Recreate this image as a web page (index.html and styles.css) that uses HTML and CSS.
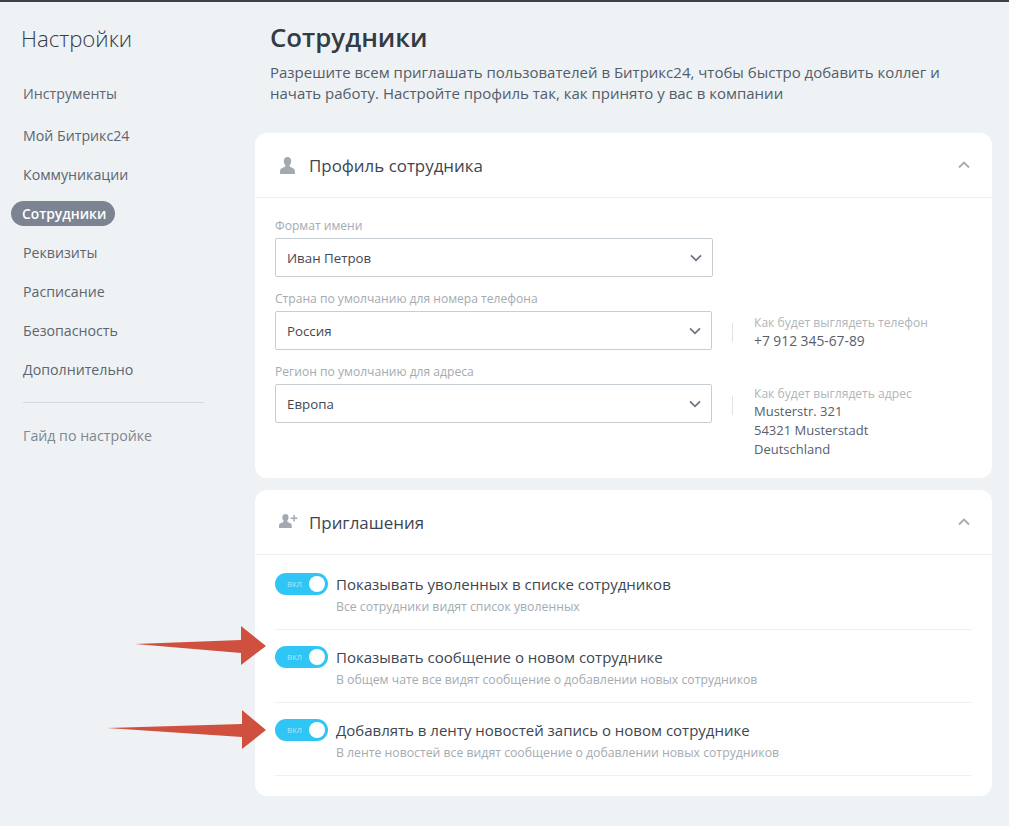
FILE: index.html
```html
<!DOCTYPE html>
<html lang="ru">
<head>
<meta charset="utf-8">
<title>Настройки</title>
<link rel="stylesheet" href="styles.css">
</head>
<body>
<div class="page">
  <aside class="sidebar">
    <div class="side-title">Настройки</div>
    <nav class="nav">
      <a class="nav-item nav-first">Инструменты</a>
      <a class="nav-item">Мой Битрикс24</a>
      <a class="nav-item">Коммуникации</a>
      <a class="nav-item nav-active"><span>Сотрудники</span></a>
      <a class="nav-item">Реквизиты</a>
      <a class="nav-item">Расписание</a>
      <a class="nav-item">Безопасность</a>
      <a class="nav-item">Дополнительно</a>
    </nav>
    <div class="nav-sep"></div>
    <a class="nav-item nav-guide">Гайд по настройке</a>
  </aside>
  <main class="main">
    <h1 class="title">Сотрудники</h1>
    <p class="lead">Разрешите всем приглашать пользователей в Битрикс24, чтобы быстро добавить коллег и начать работу. Настройте профиль так, как принято у вас в компании</p>

    <section class="card card-profile">
      <header class="card-head">
        <svg class="head-icon icon-user" width="15" height="17" viewBox="0 0 15 17"><path fill="#a3a9b2" d="M7.500 0c2.500 0 3.700 1.700 3.700 4 0 1.600-.6 3.100-1.400 3.900-.3.400-.3 1.500.2 1.900 1.300.9 3.900 1.300 4.500 2.800.3.800.4 2.400.4 4.400H0c0-2 .1-3.600.4-4.400.6-1.500 3.200-1.900 4.500-2.800.5-.4.5-1.500.2-1.900C4.400 7.100 3.800 5.600 3.800 4c0-2.300 1.200-4 3.700-4z"/></svg>
        <h2 class="card-title">Профиль сотрудника</h2>
        <svg class="collapse" width="12" height="8" viewBox="0 0 12 8"><path d="M1 6.500l5-5 5 5" fill="none" stroke="#a5abb3" stroke-width="1.800"/></svg>
      </header>
      <div class="form">
        <div class="field">
          <label class="label">Формат имени</label>
          <div class="field-row">
            <div class="select select-wide">Иван Петров<svg class="caret" width="12" height="8" viewBox="0 0 12 8"><path d="M1 1.300l5 5 5-5" fill="none" stroke="#6a737f" stroke-width="1.700"/></svg></div>
          </div>
        </div>
        <div class="field">
          <label class="label">Страна по умолчанию для номера телефона</label>
          <div class="field-row">
            <div class="select">Россия<svg class="caret" width="12" height="8" viewBox="0 0 12 8"><path d="M1 1.300l5 5 5-5" fill="none" stroke="#6a737f" stroke-width="1.700"/></svg></div>
            <div class="preview-bar"></div>
            <div class="preview preview-phone">
              <div class="preview-label">Как будет выглядеть телефон</div>
              <div class="preview-value value-phone">+7 912 345-67-89</div>
            </div>
          </div>
        </div>
        <div class="field">
          <label class="label">Регион по умолчанию для адреса</label>
          <div class="field-row">
            <div class="select">Европа<svg class="caret" width="12" height="8" viewBox="0 0 12 8"><path d="M1 1.300l5 5 5-5" fill="none" stroke="#6a737f" stroke-width="1.700"/></svg></div>
            <div class="preview-bar"></div>
            <div class="preview preview-address">
              <div class="preview-label">Как будет выглядеть адрес</div>
              <div class="preview-value">Musterstr. 321<br>54321 Musterstadt<br>Deutschland</div>
            </div>
          </div>
        </div>
      </div>
    </section>

    <section class="card card-invite">
      <header class="card-head">
        <svg class="head-icon icon-invite" width="19" height="14" viewBox="0 0 19 14"><path fill="#a3a9b2" d="M6.500 0c2.100 0 3.100 1.400 3.100 3.300 0 1.300-.5 2.500-1.200 3.200-.2.300-.2 1.100.2 1.400 1.100.7 3.300 1 3.900 2.200.2.700.3 2.200.3 3.900H0c0-1.700.1-3.200.3-3.900.6-1.200 2.800-1.500 3.900-2.200.4-.3.4-1.100.2-1.400C3.700 5.800 3.300 4.600 3.300 3.300 3.300 1.400 4.400 0 6.500 0z"/><path fill="#a3a9b2" d="M14.300 1h1.500v2.500h2.700V5h-2.700v2.500h-1.500V5h-2.700V3.500h2.700z"/></svg>
        <h2 class="card-title">Приглашения</h2>
        <svg class="collapse" width="12" height="8" viewBox="0 0 12 8"><path d="M1 6.500l5-5 5 5" fill="none" stroke="#a5abb3" stroke-width="1.800"/></svg>
      </header>
      <div class="rows">
        <div class="row">
          <div class="toggle"><span class="toggle-text">ВКЛ</span><span class="knob"></span></div>
          <div class="row-text">
            <div class="row-title">Показывать уволенных в списке сотрудников</div>
            <div class="row-sub">Все сотрудники видят список уволенных</div>
          </div>
        </div>
        <div class="row">
          <div class="toggle"><span class="toggle-text">ВКЛ</span><span class="knob"></span></div>
          <div class="row-text">
            <div class="row-title">Показывать сообщение о новом сотруднике</div>
            <div class="row-sub">В общем чате все видят сообщение о добавлении новых сотрудников</div>
          </div>
        </div>
        <div class="row">
          <div class="toggle"><span class="toggle-text">ВКЛ</span><span class="knob"></span></div>
          <div class="row-text">
            <div class="row-title">Добавлять в ленту новостей запись о новом сотруднике</div>
            <div class="row-sub">В ленте новостей все видят сообщение о добавлении новых сотрудников</div>
          </div>
        </div>
      </div>
    </section>
  </main>
  <svg class="arrow arrow-one" width="132" height="40" viewBox="0 0 132 40"><path fill="#d05040" d="M0 18l106-4V0l25 20-25 19V27z"/></svg>
  <svg class="arrow arrow-two" width="160" height="40" viewBox="0 0 160 40"><path fill="#d05040" d="M0 18l135-4V0l24 20-24 19V27z"/></svg>
</div>
</body>
</html>
```
FILE: styles.css
```css
* { box-sizing: border-box; }
html, body { margin: 0; padding: 0; }
body {
  background: #eef2f4;
  font-family: "Open Sans", "Noto Sans", sans-serif;
  color: #535c69;
}
.page {
  position: relative;
  display: flex;
  width: 1009px;
  height: 826px;
  overflow: hidden;
  border-top: 2px solid #3c424a;
}
.sidebar { width: 255px; flex: none; padding-left: 11px; }
.side-title {
  margin: 20px 0 0 10px;
  font-size: 22.200px;
  line-height: 34px;
  font-weight: 300;
  color: #333b45;
}
.nav { display: flex; flex-direction: column; margin-top: 20px; }
.nav-item {
  display: block;
  height: 39px;
  padding-left: 12px;
  font-size: 14.200px;
  line-height: 39px;
  color: #5d6570;
}
.nav-first { height: 43px; line-height: 42px; margin-top: -3px; }
.nav-active { padding-left: 0; display: flex; align-items: center; }
.nav-active span {
  display: block;
  height: 25px;
  padding: 0 9px 0 11px;
  border-radius: 13px;
  background: #7c8391;
  color: #fff;
  font-size: 13.800px;
  font-weight: 600;
  line-height: 25px;
}
.nav-sep { width: 181px; height: 1px; margin: 13px 0 13px 12px; background: #d5d9dd; }
.nav-guide { color: #7f8792; }
.main { width: 737px; flex: none; }
.title {
  margin: 19px 0 0 15px;
  font-size: 25.800px;
  line-height: 32px;
  font-weight: 600;
  color: #333b45;
}
.lead {
  width: 700px;
  margin: 9px 0 0 15px;
  font-size: 15px;
  line-height: 21px;
  color: #535c69;
}
.card {
  background: #fff;
  border-radius: 12px;
}
.card-profile { height: 345px; margin-top: 29px; }
.card-invite { height: 306px; margin-top: 12px; }
.card-head {
  display: flex;
  align-items: center;
  height: 65px;
  padding: 0 22px;
  border-bottom: 1px solid #eef1f3;
}
.head-icon { flex: none; }
.icon-user { margin-left: 3px; }
.icon-invite { margin: -3px 0 0 2px; }
.card-title {
  flex: 1;
  margin: 0 0 0 14px;
  font-size: 16.900px;
  font-weight: 400;
  color: #3d4651;
}
.icon-invite + .card-title { margin-left: 11px; }
.collapse { flex: none; }
.form { padding: 19px 20px 0; }
.field { margin-bottom: 12px; height: 61px; }
.label {
  display: block;
  height: 21px;
  font-size: 12.100px;
  line-height: 18px;
  color: #a4abb2;
}
.field-row { display: flex; align-items: flex-start; }
.select {
  position: relative;
  flex: none;
  width: 437px;
  height: 39px;
  padding-left: 11px;
  border: 1px solid #c6cdd3;
  border-radius: 2px;
  font-size: 13.300px;
  line-height: 39px;
  color: #424956;
}
.select-wide { width: 438px; }
.caret { position: absolute; right: 10px; top: 15px; }
.preview-bar {
  flex: none;
  width: 1px;
  height: 19px;
  margin: 12px 21px 0 20px;
  background: #dfe3e6;
}
.preview { flex: none; }
.preview-phone { margin-top: 3px; }
.preview-address { margin-top: 1px; }
.preview-label {
  font-size: 12.100px;
  line-height: 17px;
  color: #b0b6bc;
}
.preview-value {
  font-size: 13px;
  line-height: 19px;
  color: #58606b;
}
.value-phone { font-size: 13.800px; }
.rows { padding: 2px 20px 0; }
.row {
  display: flex;
  height: 73px;
  padding-top: 16px;
  border-bottom: 1px solid #eef1f3;
}
.toggle {
  position: relative;
  flex: none;
  width: 53px;
  height: 22px;
  border-radius: 11px;
  background: #2fc6f6;
}
.toggle-text {
  position: absolute;
  left: 12px;
  top: 0;
  font-size: 9px;
  line-height: 21px;
  color: #a3e4fa;
  text-transform: lowercase;
}
.knob {
  position: absolute;
  right: 3px;
  top: 3px;
  width: 16px;
  height: 16px;
  border-radius: 50%;
  background: #fff;
}
.row-text { margin-left: 8px; }
.row-title {
  font-size: 15px;
  line-height: 20px;
  margin-top: 1px;
  color: #3d4651;
}
.row-sub {
  font-size: 12.250px;
  line-height: 16px;
  margin-top: 5px;
  color: #a4abb2;
}
.arrow { position: absolute; }
.arrow-one { left: 135px; top: 624px; }
.arrow-two { left: 107px; top: 708px; }
```
